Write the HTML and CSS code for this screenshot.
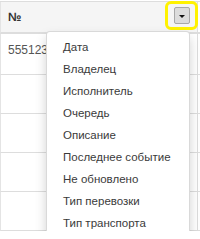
FILE: index.html
```html
<!DOCTYPE html>
<html>
<head>
<meta charset="utf-8">
<link rel="stylesheet" href="styles.css">
</head>
<body>
<div class="table">
  <div class="row head">
    <div class="cell main">
      <span class="th">№</span>
      <span class="btn-wrap">
        <button class="btn"><span class="caret"></span></button>
        <span class="highlight"></span>
      </span>
    </div>
    <div class="cell rest"></div>
  </div>
  <div class="row first">
    <div class="cell main"><span class="td">555123</span></div>
    <div class="cell rest"></div>
  </div>
  <div class="row"><div class="cell main"></div><div class="cell rest"></div></div>
  <div class="row"><div class="cell main"></div><div class="cell rest"></div></div>
  <div class="row"><div class="cell main"></div><div class="cell rest"></div></div>
  <div class="row"><div class="cell main"></div><div class="cell rest"></div></div>

  <ul class="menu">
    <li>Дата</li>
    <li>Владелец</li>
    <li>Исполнитель</li>
    <li>Очередь</li>
    <li>Описание</li>
    <li>Последнее событие</li>
    <li>Не обновлено</li>
    <li>Тип перевозки</li>
    <li>Тип транспорта</li>
  </ul>
</div>
</body>
</html>
```
FILE: styles.css
```css
html, body {
  margin: 0;
  padding: 0;
  background: #fff;
}
body {
  font-family: "Liberation Sans", Arial, sans-serif;
  font-size: 12px;
  color: #333;
  overflow: hidden;
}
.table {
  position: relative;
  margin-top: 1px;
  border-top: 1px solid #ddd;
}
.row {
  display: grid;
  grid-template-columns: 197px 1fr;
}
.cell {
  border-bottom: 1px solid #ddd;
  height: 38px;
  box-sizing: content-box;
}
.cell.main {
  border-left: 1px solid #e4e4e4;
  box-sizing: border-box;
  height: 39px;
  padding-left: 7px;
}
.cell.rest {
  border-left: 1px solid #ddd;
  height: 38px;
}
.head .cell {
  background: #f5f5f5;
  height: 30px;
  border-bottom: 2px solid #ddd;
}
.head .cell.main {
  height: 32px;
  display: flex;
  align-items: flex-start;
  justify-content: space-between;
  padding-right: 7px;
}
.head .cell.rest {
  background: #fff;
}
.th {
  font-weight: bold;
  color: #333;
  line-height: 17px;
  margin-top: 7px;
}
.first .cell { height: 40px; }
.first .cell.main { height: 41px; padding-top: 8px; }
.td {
  color: #555;
  line-height: 17px;
}
.btn-wrap {
  position: relative;
  display: flex;
  margin-top: 5px;
}
.btn {
  width: 16px;
  height: 17px;
  margin: 0;
  padding: 0;
  background: #dcdcdc;
  border: 1px solid #a8a8a8;
  border-radius: 2px;
  display: flex;
  align-items: center;
  justify-content: center;
}
.caret {
  display: block;
  width: 0;
  height: 0;
  border-top: 3px solid #111;
  border-left: 3px solid transparent;
  border-right: 3px solid transparent;
  margin-top: 1px;
}
.highlight {
  position: absolute;
  left: -9px;
  top: -6px;
  width: 27px;
  height: 23px;
  border: 3px solid #fff200;
  border-radius: 6px;
}
.menu {
  position: absolute;
  left: 46px;
  top: 29px;
  width: 144px;
  box-sizing: border-box;
  margin: 0;
  padding: 4px 0;
  list-style: none;
  background: #fff;
  border: 1px solid rgba(0,0,0,.15);
  border-radius: 4px;
  box-shadow: 0 6px 12px rgba(0,0,0,.175);
}
.menu li {
  padding: 0 16px;
  font-size: 11.5px;
  line-height: 22px;
  color: #3a3a3a;
  white-space: nowrap;
}
```
